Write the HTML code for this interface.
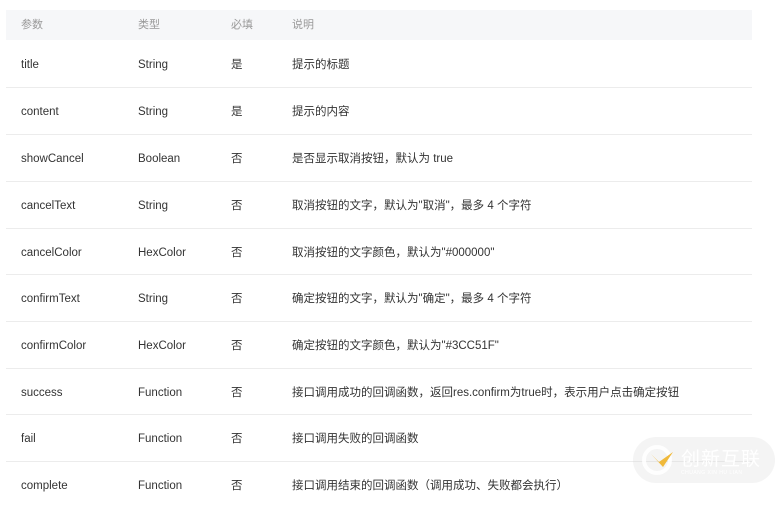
<!DOCTYPE html>
<html><head><meta charset="utf-8"><style>
body{margin:0;width:776px;height:492px;background:#fff;overflow:hidden;position:relative;font-family:"Liberation Sans","Noto Sans CJK SC",sans-serif;}
.hd{position:absolute;left:6px;top:10px;width:746px;height:30px;background:#f6f7f9;}
.r{position:absolute;left:6px;width:746px;height:47px;border-bottom:1px solid #ececec;}
.c{position:absolute;font-size:11.5px;color:#333;white-space:nowrap;line-height:14px;}
.r .c{top:18px !important;}
.h .c{color:#999;font-size:11px;}
.wm{position:absolute;left:633px;top:437px;width:142px;height:46px;border-radius:23px;background:rgba(210,210,210,0.25);}
</style></head><body>
<div class="hd h"><div class="c" style="left:15px;top:8px">参数</div><div class="c" style="left:132px;top:8px">类型</div><div class="c" style="left:225px;top:8px">必填</div><div class="c" style="left:286px;top:8px">说明</div></div>

<div class="r" style="top:40px"><div class="c" style="left:15px">title</div><div class="c" style="left:132px">String</div><div class="c" style="left:225px">是</div><div class="c" style="left:286px">提示的标题</div></div>
<div class="r" style="top:87px"><div class="c" style="left:15px">content</div><div class="c" style="left:132px">String</div><div class="c" style="left:225px">是</div><div class="c" style="left:286px">提示的内容</div></div>
<div class="r" style="top:134px"><div class="c" style="left:15px">showCancel</div><div class="c" style="left:132px">Boolean</div><div class="c" style="left:225px">否</div><div class="c" style="left:286px">是否显示取消按钮，默认为 true</div></div>
<div class="r" style="top:181px"><div class="c" style="left:15px">cancelText</div><div class="c" style="left:132px">String</div><div class="c" style="left:225px">否</div><div class="c" style="left:286px">取消按钮的文字，默认为"取消"，最多 4 个字符</div></div>
<div class="r" style="top:228px;height:46px"><div class="c" style="left:15px">cancelColor</div><div class="c" style="left:132px">HexColor</div><div class="c" style="left:225px">否</div><div class="c" style="left:286px">取消按钮的文字颜色，默认为"#000000"</div></div>
<div class="r" style="top:274px"><div class="c" style="left:15px">confirmText</div><div class="c" style="left:132px">String</div><div class="c" style="left:225px">否</div><div class="c" style="left:286px">确定按钮的文字，默认为"确定"，最多 4 个字符</div></div>
<div class="r" style="top:321px"><div class="c" style="left:15px">confirmColor</div><div class="c" style="left:132px">HexColor</div><div class="c" style="left:225px">否</div><div class="c" style="left:286px">确定按钮的文字颜色，默认为"#3CC51F"</div></div>
<div class="r" style="top:368px;height:46px"><div class="c" style="left:15px">success</div><div class="c" style="left:132px">Function</div><div class="c" style="left:225px">否</div><div class="c" style="left:286px">接口调用成功的回调函数，返回res.confirm为true时，表示用户点击确定按钮</div></div>
<div class="r" style="top:414px"><div class="c" style="left:15px">fail</div><div class="c" style="left:132px">Function</div><div class="c" style="left:225px">否</div><div class="c" style="left:286px">接口调用失败的回调函数</div></div>
<div class="r" style="top:461px;border:none"><div class="c" style="left:15px">complete</div><div class="c" style="left:132px">Function</div><div class="c" style="left:225px">否</div><div class="c" style="left:286px">接口调用结束的回调函数（调用成功、失败都会执行）</div></div>

<div class="wm">
<svg width="40" height="40" style="position:absolute;left:6px;top:3px" viewBox="0 0 40 40"><circle cx="18" cy="20" r="13" fill="none" stroke="#fff" stroke-width="4" opacity=".85"/><path d="M12 14 L20 22 L34 12 L24 27 Z" fill="#f0b93a"/></svg>
<div style="position:absolute;left:48px;top:10px;font-size:19px;color:#fff;letter-spacing:1px;font-family:'Noto Sans CJK SC',sans-serif;line-height:22px">创新互联</div>
<div style="position:absolute;left:48px;top:33px;font-size:5px;color:#fff;letter-spacing:.5px">CHUANG XIN HU LIAN</div>
</div>
</body></html>
